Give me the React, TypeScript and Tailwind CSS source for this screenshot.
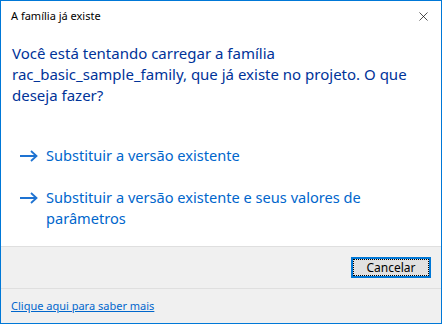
import { X } from "lucide-react";

const FONT = "font-['Segoe_UI','Noto_Sans',sans-serif]";

function Arrow() {
  return (
    <svg width="18" height="12" viewBox="0 0 18 12" className="shrink-0">
      <path
        d="M0 6 H16 M11 1 L16.5 6 L11 11"
        fill="none"
        stroke="#1e73d2"
        strokeWidth="1.8"
      />
    </svg>
  );
}

function CommandLink({ children }: { children: React.ReactNode }) {
  return (
    <div className="flex items-start gap-[8px] pl-[19px]">
      <span className="mt-[5px]">
        <Arrow />
      </span>
      <span className="text-[14.6px] leading-[21px] text-[#0066cc]">{children}</span>
    </div>
  );
}

export default function App() {
  return (
    <div
      className={`${FONT} flex h-[324px] w-[442px] flex-col border border-[#0078d7] bg-white`}
    >
      {/* title bar */}
      <div className="flex h-[30px] shrink-0 items-center justify-between pl-[10px] pr-[10px]">
        <span className="text-[11px] text-black">A família já existe</span>
        <X className="size-[15px] text-black" strokeWidth={1.1} />
      </div>

      {/* body */}
      <div className="flex h-[215px] shrink-0 flex-col pl-[11px] pt-[12px]">
        <p className="text-[15px] leading-[21px] text-[#003399]">
          Você está tentando carregar a família
          <br />
          rac_basic_sample_family, que já existe no projeto. O que
          <br />
          deseja fazer?
        </p>
        <div className="mt-[39px] flex flex-col gap-[21px] -ml-[11px]">
          <CommandLink>Substituir a versão existente</CommandLink>
          <CommandLink>
            Substituir a versão existente e seus valores de
            <br />
            parâmetros
          </CommandLink>
        </div>
      </div>

      {/* button row */}
      <div className="flex h-[42px] shrink-0 items-center justify-end border-t border-[#dfdfdf] bg-[#f0f0f0] pr-[10px]">
        <button className="flex h-[21px] w-[80px] items-center justify-center border-2 border-[#0078d7] bg-[#e1e1e1] p-0">
          <span className="flex h-full w-full items-center justify-center border border-dotted border-black text-[12px] text-black">
            Cancelar
          </span>
        </button>
      </div>

      {/* footer */}
      <div className="flex flex-1 items-center border-t border-[#dfdfdf] bg-[#f0f0f0] pl-[10px]">
        <a className="text-[11px] text-[#0066cc] underline">Clique aqui para saber mais</a>
      </div>
    </div>
  );
}
